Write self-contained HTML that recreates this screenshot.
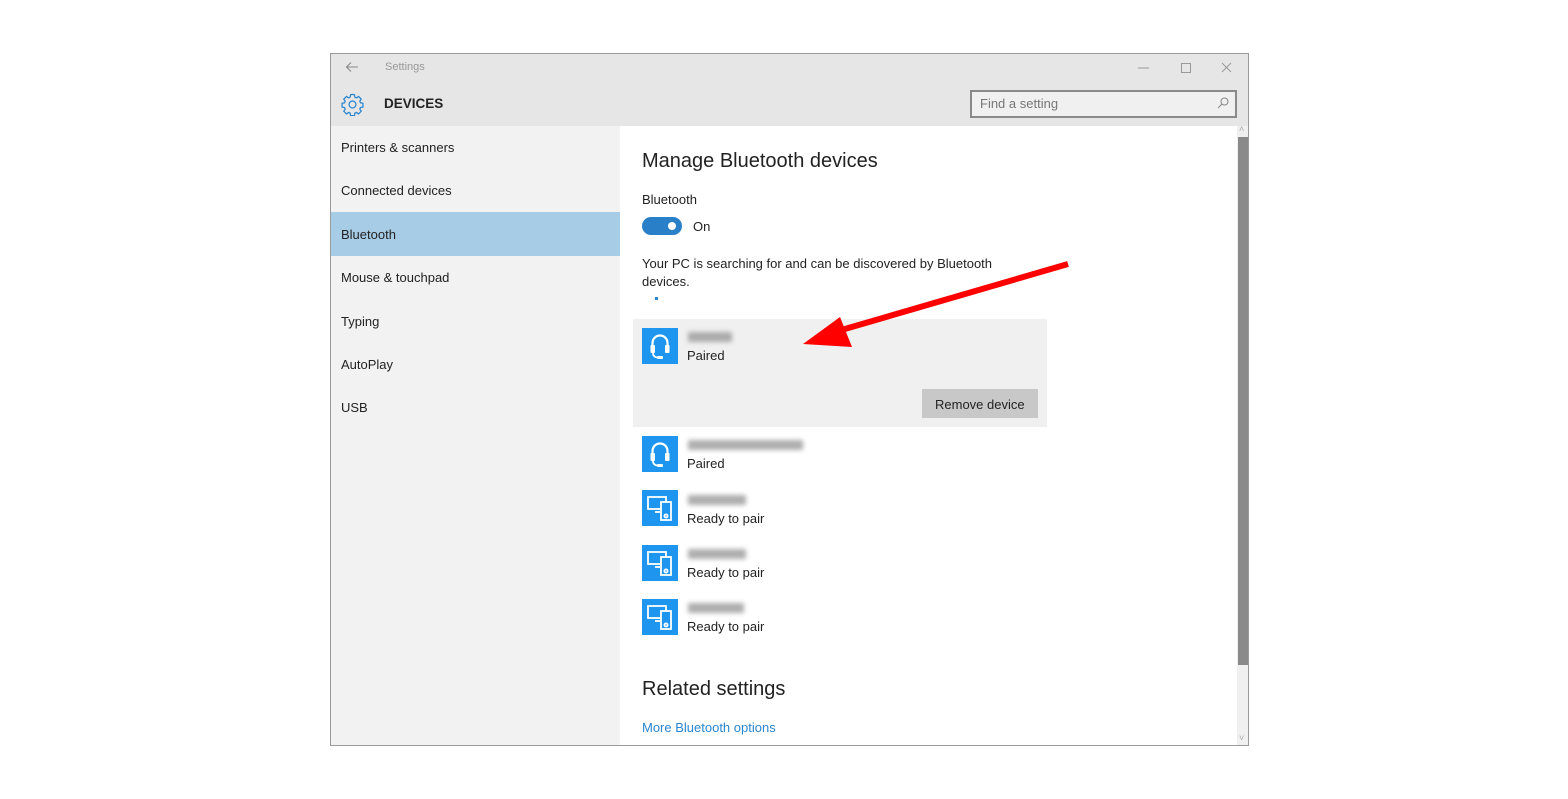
<!DOCTYPE html>
<html><head><meta charset="utf-8"><style>
*{margin:0;padding:0;box-sizing:border-box}
body{width:1568px;height:799px;background:#fff;position:relative;overflow:hidden;font-family:"Liberation Sans",sans-serif;color:#222}
.a{position:absolute;white-space:nowrap}
.win{position:absolute;left:330px;top:53px;width:919px;height:693px;border:1px solid #9a9a9a;background:#fff}
.side{position:absolute;left:331px;top:126px;width:289px;height:619px;background:#f2f2f2}
.nav{position:absolute;left:341px;font-size:13px;color:#222}
.ic{position:absolute;left:642px;width:36px;height:36px;background:#1e96f0}
.blur{position:absolute;height:10px;background:#9a9a9a;filter:blur(2.5px);opacity:.8}
.t{position:absolute;left:687px;font-size:13px;color:#222}
</style></head><body>
<div class="win"></div>
<div class="a" style="left:331px;top:54px;width:917px;height:72px;background:#e6e6e6"></div>
<svg class="a" style="left:345px;top:61px" width="14" height="12" viewBox="0 0 14 12"><path d="M13 6H2M6 1.5L1.5 6 6 10.5" stroke="#888" stroke-width="1.1" fill="none"/></svg>
<div class="a" style="left:385px;top:61px;font-size:11px;color:#999">Settings</div>
<svg class="a" style="left:1138px;top:61px" width="100" height="14" viewBox="0 0 100 14"><path d="M0 7h11" stroke="#999" stroke-width="1"/><rect x="43.5" y="2.5" width="9" height="9" stroke="#999" fill="none"/><path d="M84 2l9 9M93 2l-9 9" stroke="#999" stroke-width="1"/></svg>
<svg class="a" style="left:341px;top:93px" width="23" height="23" viewBox="0 0 24 24"><path d="M12 1.5l2 .3.5 2.6 1.6.7 2.2-1.5 2.8 2.8-1.5 2.2.7 1.6 2.6.5v4l-2.6.5-.7 1.6 1.5 2.2-2.8 2.8-2.2-1.5-1.6.7-.5 2.6h-4l-.5-2.6-1.6-.7-2.2 1.5-2.8-2.8 1.5-2.2-.7-1.6-2.6-.5v-4l2.6-.5.7-1.6-1.5-2.2 2.8-2.8 2.2 1.5 1.6-.7.5-2.6z" fill="none" stroke="#2a86d0" stroke-width="1.3"/><circle cx="12" cy="12" r="3.6" fill="none" stroke="#2a86d0" stroke-width="1.3"/></svg>
<div class="a" style="left:384px;top:96px;font-size:13.5px;font-weight:bold;color:#222">DEVICES</div>
<div class="a" style="left:970px;top:90px;width:267px;height:28px;border:2px solid #8a8a8a;background:#f0f0f0"></div>
<div class="a" style="left:980px;top:96px;font-size:13px;color:#777">Find a setting</div>
<svg class="a" style="left:1217px;top:97px" width="12" height="12" viewBox="0 0 12 12"><circle cx="7.5" cy="4.5" r="3.5" fill="none" stroke="#888"/><path d="M5 7L1 11" stroke="#888"/></svg>
<div class="side"></div>
<div class="a" style="left:331px;top:212px;width:289px;height:44px;background:#a7cde6"></div>
<div class="nav" style="top:140px">Printers &amp; scanners</div>
<div class="nav" style="top:183px">Connected devices</div>
<div class="nav" style="top:227px">Bluetooth</div>
<div class="nav" style="top:270px">Mouse &amp; touchpad</div>
<div class="nav" style="top:314px">Typing</div>
<div class="nav" style="top:357px">AutoPlay</div>
<div class="nav" style="top:400px">USB</div>
<div class="a" style="left:1237px;top:126px;width:11px;height:619px;background:#f0f0f0"></div>
<div class="a" style="left:1238px;top:137px;width:10px;height:528px;background:#8a8a8a"></div>
<div class="a" style="left:1239px;top:124px;font-size:9px;color:#aaa">˄</div>
<div class="a" style="left:1239px;top:733px;font-size:9px;color:#aaa">˅</div>
<div class="a" style="left:642px;top:150px;font-size:20px;color:#222">Manage Bluetooth devices</div>
<div class="a" style="left:642px;top:192px;font-size:13px">Bluetooth</div>
<div class="a" style="left:642px;top:217px;width:40px;height:18px;border-radius:9px;background:#2a80c8"></div>
<div class="a" style="left:668px;top:222px;width:8px;height:8px;border-radius:50%;background:#fff"></div>
<div class="a" style="left:693px;top:219px;font-size:13px">On</div>
<div class="a" style="left:642px;top:255px;font-size:13px;line-height:18px">Your PC is searching for and can be discovered by Bluetooth<br>devices.</div>
<div class="a" style="left:655px;top:297px;width:3px;height:3px;background:#2a86d0"></div>
<div class="a" style="left:633px;top:319px;width:414px;height:108px;background:#f0f0f0"></div>
<div class="ic" style="top:328px"></div>
<svg class="a" style="left:642px;top:328px" width="36" height="36" viewBox="0 0 36 36"><path d="M10.5 20v-5a7.5 7.5 0 0 1 15 0v5" fill="none" stroke="#fff" stroke-width="2.2"/><rect x="8.5" y="17" width="4.5" height="8" rx="1" fill="#fff"/><rect x="23" y="17" width="4.5" height="8" rx="1" fill="#fff"/><path d="M11 25c0 3 2 4.5 5 4.5" fill="none" stroke="#fff" stroke-width="1.8"/><rect x="15" y="28" width="6" height="3" rx="1" fill="#fff"/></svg>
<div class="blur" style="left:688px;top:332px;width:44px"></div>
<div class="t" style="top:348px">Paired</div>
<div class="a" style="left:922px;top:389px;width:116px;height:29px;background:#c8c8c8"></div>
<div class="a" style="left:935px;top:397px;font-size:13px">Remove device</div>
<div class="ic" style="top:436px"></div>
<svg class="a" style="left:642px;top:436px" width="36" height="36" viewBox="0 0 36 36"><path d="M10.5 20v-5a7.5 7.5 0 0 1 15 0v5" fill="none" stroke="#fff" stroke-width="2.2"/><rect x="8.5" y="17" width="4.5" height="8" rx="1" fill="#fff"/><rect x="23" y="17" width="4.5" height="8" rx="1" fill="#fff"/><path d="M11 25c0 3 2 4.5 5 4.5" fill="none" stroke="#fff" stroke-width="1.8"/><rect x="15" y="28" width="6" height="3" rx="1" fill="#fff"/></svg>
<div class="blur" style="left:688px;top:440px;width:115px"></div>
<div class="t" style="top:456px">Paired</div>
<div class="ic" style="top:490px"></div><div class="ic" style="top:545px"></div><div class="ic" style="top:599px"></div>
<svg class="a" style="left:642px;top:490px" width="36" height="145" viewBox="0 0 36 145">
<g fill="none" stroke="#fff" stroke-width="1.8"><rect x="6" y="7" width="18" height="12"/><path d="M13 22h5"/><rect x="19" y="12" width="10" height="18" fill="#1e96f0"/><circle cx="24" cy="26" r="1.6"/></g>
<g transform="translate(0,55)" fill="none" stroke="#fff" stroke-width="1.8"><rect x="6" y="7" width="18" height="12"/><path d="M13 22h5"/><rect x="19" y="12" width="10" height="18" fill="#1e96f0"/><circle cx="24" cy="26" r="1.6"/></g>
<g transform="translate(0,109)" fill="none" stroke="#fff" stroke-width="1.8"><rect x="6" y="7" width="18" height="12"/><path d="M13 22h5"/><rect x="19" y="12" width="10" height="18" fill="#1e96f0"/><circle cx="24" cy="26" r="1.6"/></g>
</svg>
<div class="blur" style="left:688px;top:495px;width:58px"></div>
<div class="t" style="top:511px">Ready to pair</div>
<div class="blur" style="left:688px;top:549px;width:58px"></div>
<div class="t" style="top:565px">Ready to pair</div>
<div class="blur" style="left:688px;top:603px;width:56px"></div>
<div class="t" style="top:619px">Ready to pair</div>
<div class="a" style="left:642px;top:678px;font-size:20px;color:#222">Related settings</div>
<div class="a" style="left:642px;top:720px;font-size:13px;color:#2a86d0">More Bluetooth options</div>
<svg class="a" style="left:0;top:0" width="1568" height="799"><path d="M1068 264L838 331" stroke="#f00" stroke-width="6"/><path d="M803 344L840 317 852 347Z" fill="#f00"/></svg>
</body></html>
